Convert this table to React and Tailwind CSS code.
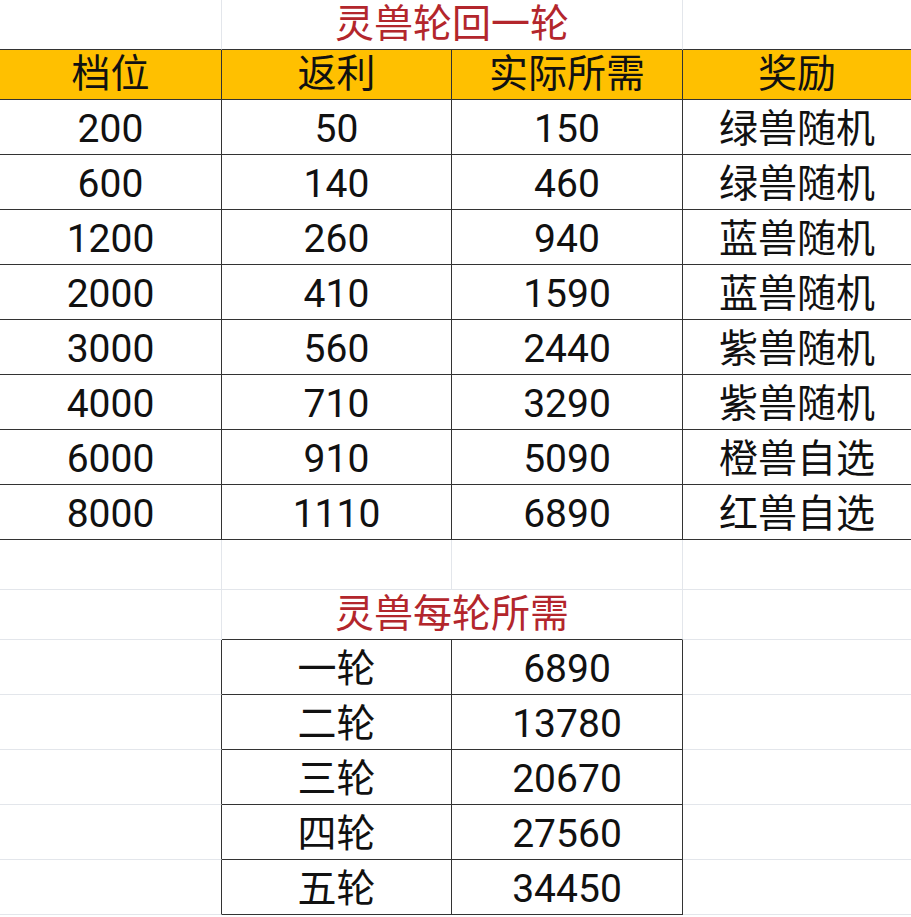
const rows = [
  ["200", "50", "150", "绿兽随机"],
  ["600", "140", "460", "绿兽随机"],
  ["1200", "260", "940", "蓝兽随机"],
  ["2000", "410", "1590", "蓝兽随机"],
  ["3000", "560", "2440", "紫兽随机"],
  ["4000", "710", "3290", "紫兽随机"],
  ["6000", "910", "5090", "橙兽自选"],
  ["8000", "1110", "6890", "红兽自选"],
];

const rounds = [
  ["一轮", "6890"],
  ["二轮", "13780"],
  ["三轮", "20670"],
  ["四轮", "27560"],
  ["五轮", "34450"],
];

const headers = ["档位", "返利", "实际所需", "奖励"];

const cell = "flex items-center justify-center leading-[1.15]";

// column widths in the sheet
const colW = (i) =>
  i === 0 ? "w-[222px]" : i === 1 ? "w-[230px]" : i === 2 ? "w-[231px]" : "flex-1 border-r-0";

export default function App() {
  return (
    <div
      className="w-[911px] bg-white text-[39px] text-[#111]"
      style={{ fontFamily: 'Roboto, "Noto Sans CJK SC", sans-serif' }}
    >
      {/* TITLE ROW */}
      <div className="flex h-[50px]">
        <div className="w-[222px] border-r border-b border-r-[#e3e6eb] border-b-[#333]" />
        <div className={`${cell} w-[461px] border-r border-b border-r-[#e3e6eb] border-b-[#333] text-[#b3262c]`}>
          灵兽轮回一轮
        </div>
        <div className="flex-1 border-b border-b-[#333]" />
      </div>

      {/* HEADER */}
      <div className="flex h-[50px] bg-[#ffc000]">
        {headers.map((h, i) => (
          <div key={h} className={`${cell} border-b border-r border-[#333] ${colW(i)}`}>
            {h}
          </div>
        ))}
      </div>

      {/* DATA */}
      {rows.map((r, ri) => (
        <div key={ri} className="flex h-[55px]">
          {r.map((v, i) => (
            <div key={i} className={`${cell} pt-[5px] border-b border-r border-[#333] ${colW(i)}`}>
              {v}
            </div>
          ))}
        </div>
      ))}

      {/* EMPTY ROW */}
      <div className="flex h-[50px]">
        <div className="w-[222px] border-r border-b border-[#e3e6eb]" />
        <div className="w-[230px] border-r border-b border-[#e3e6eb]" />
        <div className="w-[231px] border-r border-b border-[#e3e6eb]" />
        <div className="flex-1 border-b border-[#e3e6eb]" />
      </div>

      {/* SUB TITLE */}
      <div className="flex h-[50px]">
        <div className="w-[222px] border-r border-b border-[#e3e6eb]" />
        <div className={`${cell} w-[461px] border-r border-b border-r-[#e3e6eb] border-b-[#333] text-[#b3262c]`}>
          灵兽每轮所需
        </div>
        <div className="flex-1 border-b border-[#e3e6eb]" />
      </div>

      {/* SUB TABLE */}
      {rounds.map(([a, b]) => (
        <div key={a} className="flex h-[55px]">
          <div className="w-[222px] border-r border-b border-r-[#333] border-b-[#e3e6eb]" />
          <div className={`${cell} pt-[5px] w-[230px] border-r border-b border-[#333]`}>{a}</div>
          <div className={`${cell} pt-[5px] w-[231px] border-r border-b border-[#333]`}>{b}</div>
          <div className="flex-1 border-b border-[#e3e6eb]" />
        </div>
      ))}
    </div>
  );
}
